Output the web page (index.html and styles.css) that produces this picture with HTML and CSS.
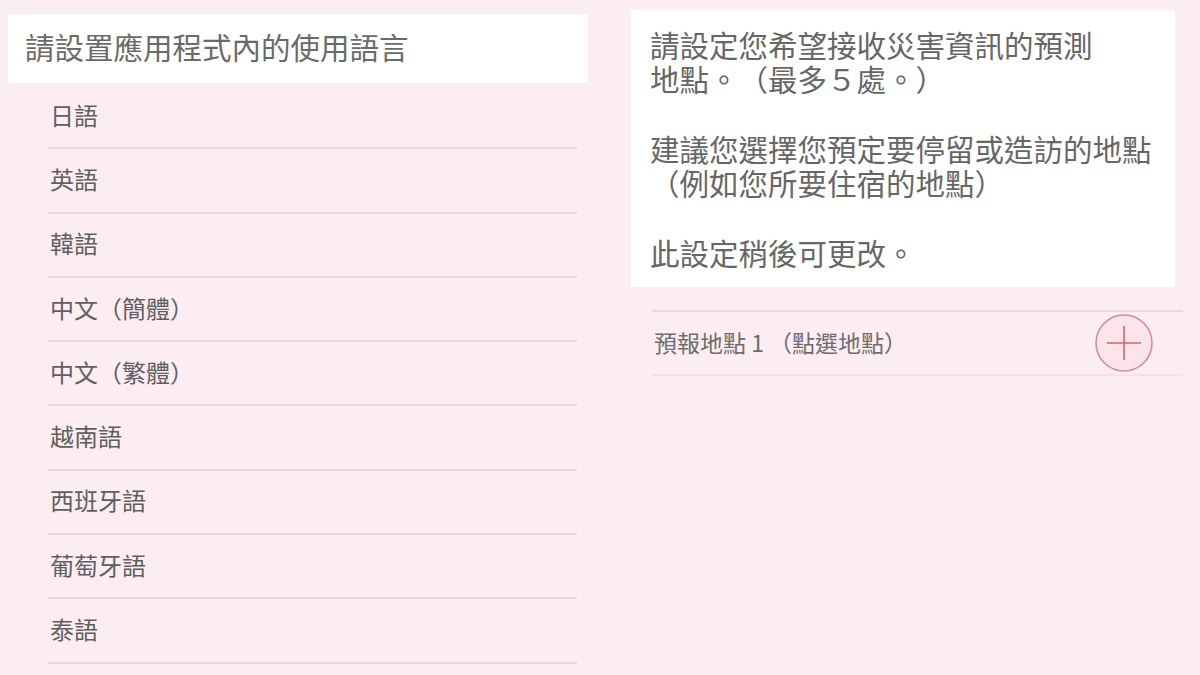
FILE: index.html
```html
<!DOCTYPE html>
<html lang="zh-Hant">
<head>
    <meta charset="UTF-8">
    <meta name="viewport" content="width=device-width, initial-scale=1.0">
    <title>語言與地點設定</title>
    <link rel="stylesheet" href="styles.css">
</head>
<body>
    <div class="page">
        <!-- Language selection -->
        <div class="language-panel">
            <div class="panel-title">請設置應用程式內的使用語言</div>
            <ul class="language-list">
                <li>日語</li>
                <li>英語</li>
                <li>韓語</li>
                <li>中文（簡體）</li>
                <li>中文（繁體）</li>
                <li>越南語</li>
                <li>西班牙語</li>
                <li>葡萄牙語</li>
                <li>泰語</li>
            </ul>
        </div>

        <!-- Forecast locations -->
        <div class="location-panel">
            <div class="info-box">
                <p>請設定您希望接收災害資訊的預測<br>地點。（最多５處。）</p>
                <p>建議您選擇您預定要停留或造訪的地點<br>（例如您所要住宿的地點）</p>
                <p>此設定稍後可更改。</p>
            </div>
            <div class="location-row">
                <span class="location-label">預報地點 1 （點選地點）</span>
                <button class="add-btn" type="button" aria-label="新增地點">
                    <svg width="60" height="60" viewBox="0 0 60 60">
                        <circle cx="30" cy="30" r="28" fill="#fbe4ea" stroke="#d88c9d" stroke-width="1.6"/>
                        <line x1="13" y1="30" x2="47" y2="30" stroke="#d65f7b" stroke-width="1.6"/>
                        <line x1="30" y1="13" x2="30" y2="47" stroke="#d65f7b" stroke-width="1.6"/>
                    </svg>
                </button>
            </div>
        </div>
    </div>
</body>
</html>
```

FILE: styles.css
```css
body {
    margin: 0;
    padding: 0;
    background-color: #fcedf2;
    font-family: "Noto Sans CJK TC", "Noto Sans", sans-serif;
    color: #646464;
    text-spacing-trim: space-all;
}

.page {
    display: flex;
    align-items: flex-start;
    width: 1200px;
    height: 675px;
    overflow: hidden;
}

.language-panel {
    width: 580px;
    margin-left: 8px;
    margin-top: 14px;
}

.panel-title {
    box-sizing: border-box;
    height: 69px;
    display: flex;
    align-items: center;
    padding: 0 0 5px 17px;
    background-color: #fff;
    font-size: 29.5px;
    color: #6a6a6a;
}

.language-list {
    list-style: none;
    margin: 0 0 0 40px;
    padding: 2px 0 0 0;
    width: 529px;
}

.language-list li {
    box-sizing: border-box;
    height: 64.3px;
    display: flex;
    align-items: center;
    padding: 0 0 4px 2px;
    border-bottom: 2px solid #e6d8dc;
    font-size: 24px;
    color: #5f5f5f;
}

.location-panel {
    margin-left: 43px;
    margin-top: 10px;
    width: 552px;
}

.info-box {
    width: 525px;
    background-color: #fff;
    padding: 17px 0 18px 19px;
    font-size: 29.5px;
    line-height: 34px;
    color: #666;
}

.info-box p {
    margin: 0 0 36px 0;
}

.info-box p:last-child {
    margin-bottom: 0;
}

.location-row {
    margin: 23px 0 0 21px;
    height: 62px;
    display: flex;
    align-items: center;
    justify-content: space-between;
    border-top: 2px solid #e6dadd;
    border-bottom: 2px solid #f3e2e7;
}

.location-label {
    padding: 0 0 2px 2px;
    font-size: 23px;
    color: #6d6d6d;
}

.add-btn {
    border: none;
    background: none;
    padding: 0;
    margin-right: 29px;
    display: flex;
    cursor: pointer;
}
```
